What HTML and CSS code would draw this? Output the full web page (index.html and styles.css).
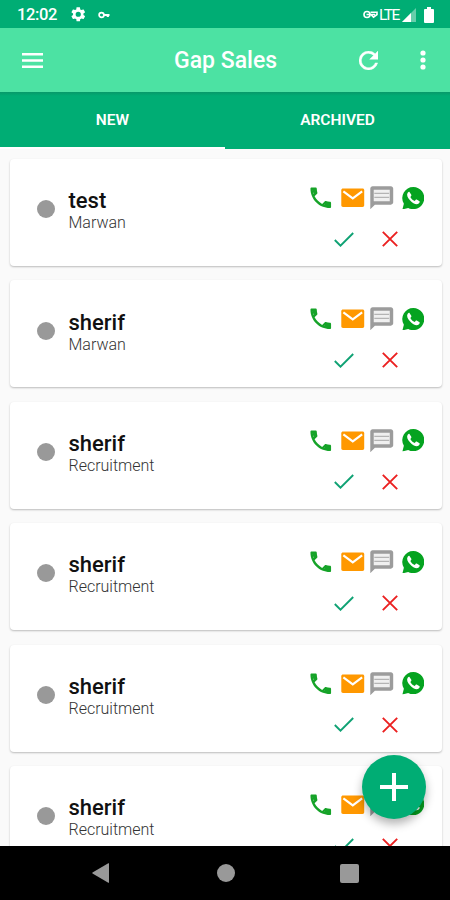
FILE: index.html
```html
<!DOCTYPE html>
<html lang="en">
<head>
<meta charset="utf-8">
<title>Gap Sales</title>
<link rel="stylesheet" href="styles.css">
</head>
<body>
<svg class="sprite" aria-hidden="true">
<symbol id="phone" viewBox="0 0 24 24"><path d="M6.540 5c.06.89.21 1.760.45 2.590l-1.200 1.200c-.41-1.200-.67-2.470-.76-3.790h1.510m9.860 12.020c.85.24 1.720.39 2.600.45v1.490c-1.320-.09-2.590-.35-3.800-.75l1.200-1.190M7.500 3H4c-.55 0-1 .45-1 1 0 9.390 7.610 17 17 17 .55 0 1-.45 1-1v-3.490c0-.55-.45-1-1-1-1.240 0-2.450-.2-3.570-.57-.36-.1-.73 0-1.020.24l-2.200 2.200c-2.830-1.450-5.150-3.760-6.590-6.590l2.200-2.200c.28-.28.36-.67.25-1.020C8.700 6.450 8.500 5.250 8.500 4c0-.55-.45-1-1-1z"/><path d="M4 4h4v4L6 9zM16 16l4 .5V20l-5-1z"/></symbol>
<symbol id="mail" viewBox="0 0 24 24"><path d="M20.500 4h-17C2.600 4 2 4.600 2 5.500v13c0 .9.600 1.500 1.500 1.500h17c.9 0 1.500-.6 1.500-1.500v-13c0-.9-.6-1.500-1.500-1.500z"/><path d="M3.800 6.500 12 12.600l8.200-6.100" fill="none" stroke="#fff" stroke-width="1.900"/></symbol>
<symbol id="chat" viewBox="0 0 24 24"><path d="M2 22V4c0-1.100.9-2 2-2h16c1.100 0 2 .9 2 2v12c0 1.100-.9 2-2 2H6z"/><path d="M5 5h14v10H5z" fill="#f0f0f0"/><path d="M5.500 8.200h13M5.500 11.700h13" stroke="#b4b4b4" stroke-width="1.200"/></symbol>
<symbol id="whatsapp" viewBox="0 0 24 24"><path d="M12.200 0A11.800 11.800 0 0 0 2 17.800L.4 24l6.200-1.700A11.800 11.800 0 1 0 12.200 0z"/><path fill="#fff" d="M8 5.200c-.5-.3-1.300 0-1.900.8-1.500 2.100-.3 5 2.400 8 3.100 3.400 6.700 5.200 9 3.800 1.200-.7 1.700-2 1.200-2.600l-3-1.800c-.5-.2-.9 0-1.200.4l-1 1.200c-2-.8-3.600-2.400-4.600-4.300l.9-1.200c.3-.4.3-.8.1-1.200z"/></symbol>
<symbol id="check" viewBox="0 0 20 15"><path d="M.8 8 6.500 13.700 19.200 1" fill="none" stroke="currentColor" stroke-width="1.900"/></symbol>
<symbol id="cross" viewBox="0 0 16 16"><path d="m.8.8 14.400 14.400M15.200.8.8 15.200" fill="none" stroke="currentColor" stroke-width="1.900"/></symbol>
</svg>
<div class="screen">
  <header class="status">
    <span class="clock">12:02</span>
    <svg class="gear" viewBox="2 2 20 20"><path d="M19.140 12.940c.04-.3.06-.61.06-.94s-.02-.64-.07-.94l2.030-1.580a.49.49 0 0 0 .12-.61l-1.920-3.320a.49.49 0 0 0-.59-.22l-2.390.96a7 7 0 0 0-1.620-.94l-.36-2.540a.48.48 0 0 0-.48-.41h-3.840c-.24 0-.43.17-.47.41l-.36 2.540c-.59.24-1.130.57-1.620.94l-2.390-.96a.48.48 0 0 0-.59.22L2.740 8.870a.48.48 0 0 0 .12.61l2.030 1.580a6 6 0 0 0 0 1.880l-2.030 1.580a.49.49 0 0 0-.12.61l1.920 3.320c.12.22.37.29.59.22l2.390-.96c.5.38 1.030.7 1.620.94l.36 2.540c.05.24.24.41.48.41h3.840c.24 0 .44-.17.47-.41l.36-2.540a7 7 0 0 0 1.620-.94l2.390.96c.22.08.47 0 .59-.22l1.920-3.320a.48.48 0 0 0-.12-.61zM12 15.600a3.600 3.600 0 1 1 0-7.200 3.600 3.600 0 0 1 0 7.200z" fill-rule="evenodd"/></svg>
    <svg class="key" viewBox="0 0 12 8"><circle cx="3.500" cy="4" r="2.400" fill="none" stroke="#fff" stroke-width="1.700"/><path d="M5.500 2.900h6v2h-.6v1H8.700v-1H5.500z"/></svg>
    <svg class="vpn" viewBox="0 0 15 9"><g fill="none" stroke="#fff" stroke-width="1.600"><circle cx="4" cy="4.500" r="3"/><path d="M3.500 4.500H8l2.500 2.700L14 4.500V2.300H7.500M8.500 4.500H12"/></g></svg>
    <span class="lte">LTE</span>
    <svg class="signal" viewBox="0 0 14 14"><path d="M0 14 14 0v14z" opacity=".4"/><path d="M0 14 9 5v9z"/></svg>
    <svg class="battery" viewBox="0 0 10 16"><path d="M3 0h4v2h2q1 0 1 1v12q0 1-1 1H1q-1 0-1-1V3q0-1 1-1h2z"/></svg>
  </header>
  <div class="appbar">
    <svg class="menu" viewBox="0 0 21 15"><path d="M0 0h21v2.500H0zM0 6.200h21v2.500H0zM0 12.400h21v2.500H0z"/></svg>
    <h1>Gap Sales</h1>
    <svg class="refresh" viewBox="4 4 16 16"><path d="M17.650 6.350A7.960 7.960 0 0 0 12 4a8 8 0 1 0 7.730 10h-2.080A6 6 0 1 1 12 6c1.660 0 3.140.69 4.220 1.780L13 11h7V4z" stroke="currentColor" stroke-width=".35"/></svg>
    <svg class="more" viewBox="0 0 6 20"><circle cx="3" cy="3" r="2.600"/><circle cx="3" cy="10" r="2.600"/><circle cx="3" cy="17" r="2.600"/></svg>
  </div>
  <nav class="tabs"><div class="tab active">NEW</div><div class="tab">ARCHIVED</div></nav>
  <main class="list">
    <article class="card"><i class="dot"></i><div class="info"><h2>test</h2><p>Marwan</p></div><div class="actions"><div class="contact"><svg class="phone"><use href="#phone"/></svg><svg class="mail"><use href="#mail"/></svg><svg class="chat"><use href="#chat"/></svg><svg class="whatsapp"><use href="#whatsapp"/></svg></div><div class="decide"><svg class="check"><use href="#check"/></svg><svg class="cross"><use href="#cross"/></svg></div></div></article>
    <article class="card"><i class="dot"></i><div class="info"><h2>sherif</h2><p>Marwan</p></div><div class="actions"><div class="contact"><svg class="phone"><use href="#phone"/></svg><svg class="mail"><use href="#mail"/></svg><svg class="chat"><use href="#chat"/></svg><svg class="whatsapp"><use href="#whatsapp"/></svg></div><div class="decide"><svg class="check"><use href="#check"/></svg><svg class="cross"><use href="#cross"/></svg></div></div></article>
    <article class="card"><i class="dot"></i><div class="info"><h2>sherif</h2><p>Recruitment</p></div><div class="actions"><div class="contact"><svg class="phone"><use href="#phone"/></svg><svg class="mail"><use href="#mail"/></svg><svg class="chat"><use href="#chat"/></svg><svg class="whatsapp"><use href="#whatsapp"/></svg></div><div class="decide"><svg class="check"><use href="#check"/></svg><svg class="cross"><use href="#cross"/></svg></div></div></article>
    <article class="card"><i class="dot"></i><div class="info"><h2>sherif</h2><p>Recruitment</p></div><div class="actions"><div class="contact"><svg class="phone"><use href="#phone"/></svg><svg class="mail"><use href="#mail"/></svg><svg class="chat"><use href="#chat"/></svg><svg class="whatsapp"><use href="#whatsapp"/></svg></div><div class="decide"><svg class="check"><use href="#check"/></svg><svg class="cross"><use href="#cross"/></svg></div></div></article>
    <article class="card"><i class="dot"></i><div class="info"><h2>sherif</h2><p>Recruitment</p></div><div class="actions"><div class="contact"><svg class="phone"><use href="#phone"/></svg><svg class="mail"><use href="#mail"/></svg><svg class="chat"><use href="#chat"/></svg><svg class="whatsapp"><use href="#whatsapp"/></svg></div><div class="decide"><svg class="check"><use href="#check"/></svg><svg class="cross"><use href="#cross"/></svg></div></div></article>
    <article class="card"><i class="dot"></i><div class="info"><h2>sherif</h2><p>Recruitment</p></div><div class="actions"><div class="contact"><svg class="phone"><use href="#phone"/></svg><svg class="mail"><use href="#mail"/></svg><svg class="chat"><use href="#chat"/></svg><svg class="whatsapp"><use href="#whatsapp"/></svg></div><div class="decide"><svg class="check"><use href="#check"/></svg><svg class="cross"><use href="#cross"/></svg></div></div></article>
  </main>
  <button class="fab" aria-label="Add"><svg viewBox="0 0 28 28"><path d="M12 0h4v12h12v4H16v12h-4V16H0v-4h12z"/></svg></button>
  <footer class="navbar">
    <svg class="back" viewBox="0 0 18 20"><path d="M17 .5v19q0 .5-.7.2L.5 10.500q-.5-.5 0-.9L16.300.3q.7-.3.700.2z"/></svg>
    <i class="home"></i>
    <i class="recent"></i>
  </footer>
</div>
</body>
</html>
```
FILE: styles.css
```css
* { box-sizing: border-box; }
body, h1, h2, p { margin: 0; }
body { font-family: Roboto, sans-serif; background: #fafafa; }
svg { display: block; flex: none; fill: currentColor; }
.sprite { position: absolute; width: 0; height: 0; }
.screen { position: relative; width: 450px; height: 900px; overflow: hidden; display: flex; flex-direction: column; color: #fff; }

.status { height: 28px; flex: none; background: #00ad74; display: flex; align-items: center; padding: 1px 16px 0 17px; }
.clock { font-size: 16.5px; font-weight: 500; width: 54px; line-height: 28px; letter-spacing: -0.4px; }
.gear { width: 14.5px; height: 14.5px; }
.key { width: 12px; height: 8px; margin-left: 12.5px; }
.vpn { width: 15px; height: 9px; margin-left: auto; }
.lte { font-size: 15.5px; width: 23px; margin-left: 1px; line-height: 28px; letter-spacing: -1.5px; }
.signal { width: 14px; height: 14px; }
.battery { width: 10px; height: 16px; margin-left: 8px; }

.appbar { height: 64px; flex: none; background: #4ce2a3; display: flex; align-items: center; padding: 0 24px 0 22px; }
.menu { width: 21px; height: 15px; }
h1 { font-size: 23px; font-weight: 500; line-height: 30px; margin: 2px 0 0 131px; white-space: nowrap; }
.refresh { width: 19px; height: 19px; margin-left: auto; }
.more { width: 6px; height: 20px; margin-left: 42.5px; }

.tabs { height: 57px; flex: none; display: grid; grid-template-columns: 1fr 1fr; background: linear-gradient(#079969, #00ad74 4px); }
.tab { font-size: 15.5px; font-weight: 600; line-height: 56px; text-align: center; height: 57px; }
.active { border-bottom: 2px solid #fff; }

.list { flex: 1; min-height: 0; overflow: hidden; background: #fafafa; padding: 10px 8.5px 0 9.5px; display: flex; flex-direction: column; gap: 14.4px; }
.card { height: 107px; flex: none; display: flex; background: #fff; border-radius: 4px; box-shadow: 0 1px 2px rgba(0,0,0,.25); padding: 0 17.5px 0 27.5px; }
.dot { width: 18px; height: 18px; border-radius: 50%; background: #999; margin-top: 41.3px; }
.info { margin: 29.3px 0 0 13.5px; }
h2 { font-size: 22px; font-weight: 500; line-height: 26px; color: #111; }
p { font-size: 16px; line-height: 18px; color: #333; font-weight: 300; }
.actions { margin-left: auto; margin-top: 25px; }
.contact { display: flex; align-items: center; }
.phone, .mail, .chat { width: 27.5px; height: 27.5px; }
.phone { color: #16a329; }
.mail { color: #ff9800; margin-left: 4px; }
.chat { color: #9c9c9c; margin-left: 1.5px; }
.whatsapp { width: 22.5px; height: 22.5px; color: #05a320; margin-left: 6.5px; }
.decide { display: flex; align-items: center; margin: 19.5px 0 0 27px; gap: 28px; }
.check { width: 20px; height: 15px; color: #10a274; }
.cross { width: 16px; height: 16px; color: #eb2020; }

.fab { position: absolute; left: 362px; top: 755px; width: 64px; height: 64px; border: 0; border-radius: 50%; background: #00ad74; color: #fff; display: grid; place-items: center; padding: 0; box-shadow: 0 5px 10px rgba(0,0,0,.3); }
.fab svg { width: 28px; height: 28px; }
.navbar { height: 54px; flex: none; background: #000; color: #999; display: flex; align-items: center; padding-left: 92px; }
.back { width: 18px; height: 20px; }
.home { width: 18px; height: 18px; border-radius: 50%; background: #999; margin-left: 107px; }
.recent { width: 19px; height: 19px; border-radius: 2px; background: #999; margin-left: 105px; }
```
